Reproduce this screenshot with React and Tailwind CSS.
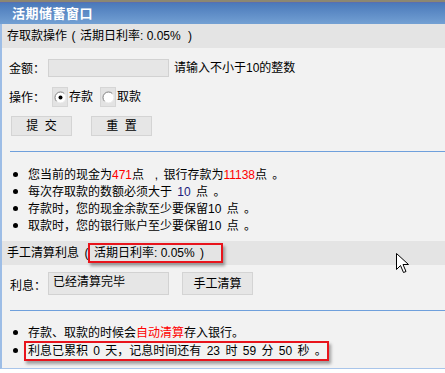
import React from "react";

function C({ children }) {
  return <span className="font-['Noto_Sans_CJK_SC',sans-serif]">{children}</span>;
}

function P({ children, w = "w-[12px]" }) {
  return <span className={`inline-block ${w} text-center`}>{children}</span>;
}

function Radio({ checked }) {
  return (
    <span className="inline-flex items-center justify-center w-[16px] h-[20px] bg-[#e3e3e3] border border-[#d6d6d6]">
      <svg width="13" height="13" viewBox="0 0 13 13">
        <circle cx="6.5" cy="6.5" r="5.5" fill="#fff" />
        <path d="M2.6 10.4 A5.5 5.5 0 0 1 10.4 2.6" stroke="#808080" strokeWidth="1" fill="none" />
        <path d="M10.4 2.6 A5.5 5.5 0 0 1 2.6 10.4" stroke="#e8e8e8" strokeWidth="1" fill="none" />
        {checked && <circle cx="6.5" cy="6.5" r="2" fill="#000" />}
      </svg>
    </span>
  );
}

function Bullet({ children, h = "h-[17px]" }) {
  return (
    <li className={`flex items-center ${h}`}>
      <span className="w-[5px] h-[5px] rounded-full bg-black ml-[11px] mr-[10px] shrink-0" />
      <span className="whitespace-pre [word-spacing:2px]">{children}</span>
    </li>
  );
}

function Btn({ children, w }) {
  return (
    <div className={`${w} h-[20px] flex items-center justify-center bg-[#e6e6e6] border border-[#d4d4d4] text-[12px] text-black`}>
      {children}
    </div>
  );
}

export default function App() {
  return (
    <div className="w-[445px] h-[373px] bg-white overflow-hidden relative text-[12px] text-black font-['Liberation_Sans','Noto_Sans_CJK_SC',sans-serif]">
      <div className="h-[2px] bg-[#8c8772]" />
      <div className="h-[22px] bg-gradient-to-b from-[#4a79ba] to-[#73a0d3] border-t border-[#5a6fb0] flex items-center pl-[12px]">
        <span className="text-white font-bold text-[13px] tracking-[0.5px]">活期储蓄窗口</span>
      </div>
      <div className="border-l-2 border-[#9dbde6] border-b border-b-[#a9c5ea]">
        <div className="h-[24px] bg-[#e4e4e4] flex items-center pl-[5px]">
          <span className="whitespace-pre">
            存取款操作<P w="w-[13px]">(</P>活期日利率: 0.05% <P w="w-[12px]">)</P>
          </span>
        </div>
        <div className="bg-[#f2f2f2] pt-[11px] pb-[7px]">
          <div className="flex items-center h-[18px] pl-[7px]">
            <span className="w-[39px]">金额<C>：</C></span>
            <div className="w-[121px] h-[18px] bg-[#e6e6e6] border border-[#d2d2d2]" />
            <span className="ml-[5px]">请输入不小于10的整数</span>
          </div>
          <div className="flex items-center h-[20px] mt-[10px] pl-[7px]">
            <span className="w-[43px]">操作<C>：</C></span>
            <Radio checked />
            <span className="ml-[1px] mr-[7px]">存款</span>
            <Radio />
            <span className="ml-[1px]">取款</span>
          </div>
          <div className="flex items-center mt-[9px] pl-[9px] gap-[19px]">
            <Btn w="w-[61px]">提&nbsp;&nbsp;交</Btn>
            <Btn w="w-[61px]">重&nbsp;&nbsp;置</Btn>
          </div>
          <div className="mt-[15px] ml-[8px] h-[1px] bg-[#6fa0dc]" />
          <ul className="mt-[14px]">
            <Bullet>
              您当前的现金为<span className="text-[#ff0000]">471</span>点{"\u00a0\u00a0,\u00a0"}银行存款为<span className="text-[#ff0000]">11138</span>点 <C>。</C>
            </Bullet>
            <Bullet>
              每次存取款的数额必须大于 <span className="text-[#1a1a7a]">10</span> 点 <C>。</C>
            </Bullet>
            <Bullet>存款时<C>，</C>您的现金余款至少要保留10 点 <C>。</C></Bullet>
            <Bullet>取款时<C>，</C>您的银行账户至少要保留10 点 <C>。</C></Bullet>
          </ul>
        </div>
        <div className="h-[24px] bg-[#e4e4e4] flex items-center pl-[5px]">
          <span className="whitespace-pre">
            手工清算利息<P w="w-[15px]">(</P>
            <span className="relative">
              活期日利率: 0.05% <P w="w-[8px]">)</P>
              <span className="absolute -left-[6px] -right-[17px] -top-[3px] -bottom-[3px] border-2 border-[#e8141c] shadow-[2px_3px_3px_rgba(0,0,0,0.35)]" />
            </span>
          </span>
        </div>
        <div className="bg-[#f2f2f2] pt-[7px] pb-[9px]">
          <div className="flex items-center h-[23px] pl-[8px]">
            <span className="w-[38px] mt-[4px]">利息<C>：</C></span>
            <div className="w-[121px] h-[23px] bg-[#e6e6e6] border border-[#d2d2d2] pl-[4px] leading-[18px]">已经清算完毕</div>
            <div className="ml-[13px]">
              <div className="w-[71px] h-[23px] flex items-center justify-center bg-[#e6e6e6] border border-[#d4d4d4]">手工清算</div>
            </div>
          </div>
          <div className="mt-[15px] ml-[8px] h-[1px] bg-[#6fa0dc]" />
          <ul className="mt-[12px]">
            <Bullet h="h-[18px]">
              存款<C>、</C>取款的时候会<span className="text-[#ff0000]">自动清算</span>存入银行<C>。</C>
            </Bullet>
            <Bullet h="h-[18px]">
              <span className="relative">
                利息已累积 0 天<C>，</C>记息时间还有 23 时 59 分 50 秒 <C>。</C>
                <span className="absolute -left-[4px] right-[-2px] -top-[3px] -bottom-[3px] border-2 border-[#e8141c] shadow-[2px_3px_3px_rgba(0,0,0,0.35)]" />
              </span>
            </Bullet>
          </ul>
        </div>
      </div>
      <svg className="absolute left-[396px] top-[253px]" width="13" height="21" viewBox="0 0 13 21">
        <path d="M0.5 0.5 L0.5 16.5 L4.5 12.5 L7.5 19.5 L10 18.5 L7 11.5 L12.5 11.5 Z" fill="#fff" stroke="#000" strokeWidth="1" strokeLinejoin="miter" />
      </svg>
    </div>
  );
}
